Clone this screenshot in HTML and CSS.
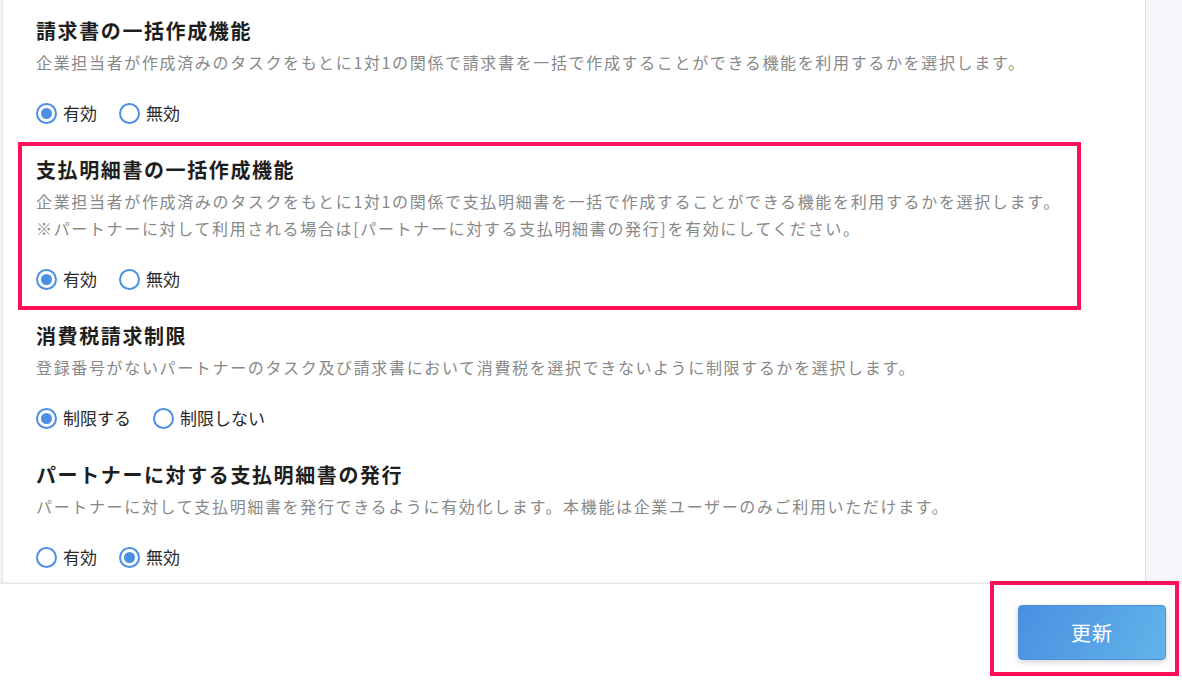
FILE: index.html
```html
<!DOCTYPE html>
<html lang="ja">
<head>
<meta charset="utf-8">
<title>設定</title>
<link rel="stylesheet" href="styles.css">
</head>
<body>
<div class="page">
  <div class="main">
    <div class="strip"></div>
    <div class="panel">
      <section class="setting">
        <h2 class="title">請求書の一括作成機能</h2>
        <p class="desc">企業担当者が作成済みのタスクをもとに1対1の関係で請求書を一括で作成することができる機能を利用するかを選択します。</p>
        <div class="radios">
          <label class="radio"><span class="dot on"></span>有効</label>
          <label class="radio"><span class="dot"></span>無効</label>
        </div>
      </section>
      <section class="setting">
        <h2 class="title">支払明細書の一括作成機能</h2>
        <p class="desc">企業担当者が作成済みのタスクをもとに1対1の関係で支払明細書を一括で作成することができる機能を利用するかを選択します。<br>※パートナーに対して利用される場合は[パートナーに対する支払明細書の発行]を有効にしてください。</p>
        <div class="radios">
          <label class="radio"><span class="dot on"></span>有効</label>
          <label class="radio"><span class="dot"></span>無効</label>
        </div>
      </section>
      <section class="setting">
        <h2 class="title">消費税請求制限</h2>
        <p class="desc">登録番号がないパートナーのタスク及び請求書において消費税を選択できないように制限するかを選択します。</p>
        <div class="radios">
          <label class="radio"><span class="dot on"></span>制限する</label>
          <label class="radio"><span class="dot"></span>制限しない</label>
        </div>
      </section>
      <section class="setting">
        <h2 class="title">パートナーに対する支払明細書の発行</h2>
        <p class="desc">パートナーに対して支払明細書を発行できるように有効化します。本機能は企業ユーザーのみご利用いただけます。</p>
        <div class="radios">
          <label class="radio"><span class="dot"></span>有効</label>
          <label class="radio"><span class="dot on"></span>無効</label>
        </div>
      </section>
    </div>
    <div class="side"></div>
  </div>
  <div class="footer">
    <button class="btn" type="button">更新</button>
  </div>
  <div class="mark mark-section"></div>
  <div class="mark mark-button"></div>
</div>
</body>
</html>
```
FILE: styles.css
```css
* { box-sizing: border-box; }
html, body { margin: 0; padding: 0; }
body {
  background: #ffffff;
  font-family: "Noto Sans CJK JP", "Noto Sans", sans-serif;
  color: #222;
}
.page {
  position: relative;
  width: 1182px;
  height: 682px;
  overflow: hidden;
  display: flex;
  flex-direction: column;
}
.main {
  display: flex;
  height: 583px;
  flex: none;
}
.strip {
  width: 2px;
  background: #f3f4f8;
}
.panel {
  flex: 1;
  background: #fff;
  border-left: 1px solid #e3e3ea;
  border-right: 1px solid #e2e2e2;
  padding: 17px 0 0 33px;
  overflow: hidden;
}
.side {
  width: 36px;
  background: #f5f6fa;
}
.setting {
  margin-bottom: 32px;
}
.title {
  margin: 0 0 4px;
  font-size: 20px;
  line-height: 28px;
  font-weight: 700;
  letter-spacing: 1.6px;
  color: #1e1e1e;
}
.desc {
  margin: 0;
  font-size: 16px;
  line-height: 27px;
  letter-spacing: 1.65px;
  color: #888;
}
.radios {
  display: flex;
  gap: 22px;
  margin-top: 26px;
  height: 22px;
  align-items: center;
}
.radio {
  display: flex;
  align-items: center;
  gap: 6px;
  font-size: 17px;
  letter-spacing: 0;
  color: #2a2a2a;
  line-height: 22px;
}
.dot {
  width: 21px;
  height: 21px;
  border: 2px solid #4a8fe3;
  border-radius: 50%;
  display: flex;
  align-items: center;
  justify-content: center;
  flex: none;
}
.dot.on::after {
  content: "";
  width: 11px;
  height: 11px;
  border-radius: 50%;
  background: #4a8fe3;
}
.footer {
  flex: 1;
  background: #fff;
  border-top: 1px solid #e6e6e6;
  box-shadow: 0 -1px 3px rgba(0,0,0,0.06);
  display: flex;
  justify-content: flex-end;
  align-items: flex-start;
  padding: 21px 16px 0 0;
}
.btn {
  width: 148px;
  height: 55px;
  border: 1px solid #4a8fe0;
  border-radius: 4px;
  background: linear-gradient(120deg, #4a8fe2 0%, #62b4e9 100%);
  color: #fff;
  font-family: inherit;
  font-size: 20px;
  letter-spacing: 1px;
  box-shadow: 0 2px 6px rgba(0,0,0,0.18);
}
.mark {
  position: absolute;
  border: 4px solid #ff0f58;
  pointer-events: none;
}
.mark-section {
  left: 18px;
  top: 142px;
  width: 1063px;
  height: 168px;
}
.mark-button {
  left: 990px;
  top: 581px;
  width: 189px;
  height: 95px;
}
```
